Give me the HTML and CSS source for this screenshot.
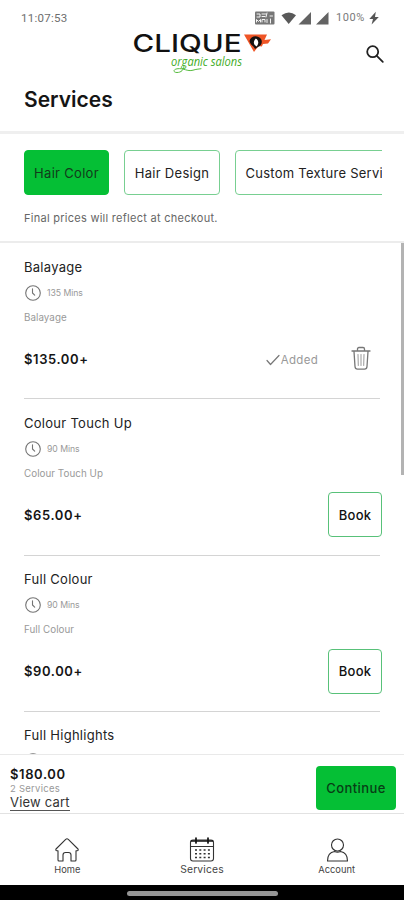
FILE: index.html
```html
<!DOCTYPE html>
<html lang="en">
<head>
<meta charset="utf-8">
<title>Services</title>
<link rel="stylesheet" href="styles.css">
</head>
<body>
<svg class="defs" aria-hidden="true">
  <symbol id="clock" viewBox="0 0 18 18"><circle cx="9" cy="9" r="7.3"/><path d="M8.500 4.800V9l2.200 2.200"/></symbol>
</svg>
<div class="app">
  <header class="top">
    <div class="status">
      <span class="time">11:07:53</span>
      <div class="signals">
        <svg class="sig" viewBox="0 0 76 16" width="76" height="16">
          <rect x="0" y="1.500" width="19.500" height="13" rx="1" fill="#777"/>
          <path d="M2 4h3v3H2M7 4h4M7 6.500h3M12 3l-1 4M1.500 12V9.500l2 2 2-2V12M7 12V9.500h3V12M12 9.500v3M15 6h2.500M15.500 9v4" fill="none" stroke="#f4f4f4" stroke-width="1"/>
          <path d="M26.500 5.200q7.500-5.500 14.500 0L33.700 14z" fill="#595959"/>
          <path d="M56 2v12.500H43.500zM73.500 2v12.500H61z" fill="#636363"/>
        </svg>
        <span class="pct">100%</span>
        <svg viewBox="0 0 10 14" width="10" height="14"><path d="M6.800.8L.3 8H4L2.600 13.500 9.800 6H6z" fill="#555"/></svg>
      </div>
    </div>
    <div class="brand">
      <svg class="logo" viewBox="0 0 140 44" width="140" height="44">
        <text class="logo-name" x="-.5" y="18" textLength="109" lengthAdjust="spacingAndGlyphs">CLIQUE</text>
        <path d="M111 .5h23l-2.500 5.500 6.500-.8-3 4.300-5 .5-1.200 2.500-3.300-.5-4.500 6z" fill="#ef5526"/>
        <path d="M116.500 7c1-5 8-6.500 11.500-2 2 3 0 7-3 8l-3 2c-1-3-4.500-3.500-5.500-8z" fill="#16110f"/>
        <path d="M122.800 4.500c3 2 3.200 5 .8 8-3.500-2-3.500-5-.8-8z" fill="#fff"/>
        <text class="logo-tag" x="38" y="32" textLength="71" lengthAdjust="spacingAndGlyphs">organic salons</text>
        <path d="M51 32c0 4-3 6.500-7 6.500-4 0-4-3 0-3.700 7-1 10 3 16 1.400 3-1 5-1 8-1.500" fill="none" stroke="#55bb3d" stroke-width="1"/>
      </svg>
      <svg class="search" viewBox="0 0 20 20" width="20" height="20"><circle cx="7.700" cy="7.700" r="5.500"/><path d="M11.800 11.800l6 6"/></svg>
    </div>
    <h1>Services</h1>
  </header>
  <section class="filters">
    <div class="chips">
      <button class="chip on">Hair Color</button>
      <button class="chip design">Hair Design</button>
      <button class="chip custom">Custom Texture Services</button>
    </div>
    <p class="note">Final prices will reflect at checkout.</p>
  </section>
  <main class="list">
    <article class="service">
      <h2>Balayage</h2>
      <div class="mins"><svg class="clock"><use href="#clock"/></svg><span>135 Mins</span></div>
      <p class="desc">Balayage</p>
      <div class="buy">
        <b>$135.00+</b>
        <div class="added">
          <svg class="check" viewBox="0 0 14 12" width="14" height="12"><path d="M1 6.500l3.500 4L13 1.500"/></svg>
          <span>Added</span>
          <svg class="trash" viewBox="0 0 20 25" width="20" height="25"><path d="M1 5h18M6.500 5V3q0-1.500 1.500-1.500h4q1.500 0 1.500 1.500v2M3 5.500l1 15q.2 2.700 2.500 2.700h7q2.300 0 2.500-2.700l1-15"/><path class="ribs" d="M7 8.500l.3 11M10 8.500v11M13 8.500l-.3 11"/></svg>
        </div>
      </div>
    </article>
    <article class="service">
      <h2>Colour Touch Up</h2>
      <div class="mins"><svg class="clock"><use href="#clock"/></svg><span>90 Mins</span></div>
      <p class="desc">Colour Touch Up</p>
      <div class="buy"><b>$65.00+</b><button class="book">Book</button></div>
    </article>
    <article class="service">
      <h2>Full Colour</h2>
      <div class="mins"><svg class="clock"><use href="#clock"/></svg><span>90 Mins</span></div>
      <p class="desc">Full Colour</p>
      <div class="buy"><b>$90.00+</b><button class="book">Book</button></div>
    </article>
    <article class="service">
      <h2>Full Highlights</h2>
      <div class="mins"><svg class="clock"><use href="#clock"/></svg></div>
    </article>
    <div class="scrollbar"></div>
  </main>
  <section class="cart">
    <div class="total"><b>$180.00</b><small>2 Services</small><a>View cart</a></div>
    <button class="continue">Continue</button>
  </section>
  <nav class="tabs">
    <a><svg viewBox="0 0 26 26" width="26" height="26"><path d="M2 12L11.700 2.300q1.300-1.100 2.600 0L24 12q.8 1.500-1 1.700h-1V23q0 1-1 1h-4v-6q0-2.500-2.500-2.500h-3Q9 15.500 9 18v6H5q-1 0-1-1v-9.300H3Q1.300 13.500 2 12z"/></svg><span>Home</span></a>
    <a><svg viewBox="0 0 26 26" width="26" height="26"><rect x="1.500" y="3" width="23" height="21" rx="2.500"/><path d="M1.500 9.500h23"/><path class="bold" d="M2.500 4h21M7 1v5M19 1v5"/><path class="days" d="M6 13h15M6 16.700h15M6 20.400h15"/></svg><span class="current">Services</span></a>
    <a><svg viewBox="0 0 26 26" width="26" height="26"><circle cx="13.500" cy="8" r="6"/><path d="M3.500 24q0-8.500 7-9.500 3 1.200 6 0 7 1 7 9.500z"/></svg><span class="acct">Account</span></a>
  </nav>
  <footer class="gesture"><i></i></footer>
</div>
</body>
</html>
```
FILE: styles.css
```css
* { box-sizing: border-box; }
body { margin: 0; background: #fff; font-family: Inter, "Liberation Sans", sans-serif; color: #222; }
h1, h2, p { margin: 0; }
button { font: inherit; color: inherit; background: none; padding: 0; }
svg { display: block; flex: none; fill: none; stroke-linecap: round; stroke-linejoin: round; }
.defs { position: absolute; width: 0; height: 0; }
.app { width: 404px; height: 900px; display: flex; flex-direction: column; overflow: hidden; }

.top { height: 134px; flex: none; border-bottom: 3px solid #efefef; }
.status { height: 32px; padding: 3px 25px 0 21px; display: flex; justify-content: space-between; align-items: center; color: #6e6e6e; font-family: Roboto, sans-serif; }
.time { font-size: 11.5px; letter-spacing: .25px; }
.signals { display: flex; align-items: center; }
.pct { font-size: 11px; letter-spacing: .6px; margin: 0 4px 0 5px; color: #7a7a7a; }
.brand { height: 44px; padding: 0 19px 0 133px; display: flex; justify-content: space-between; }
.logo { margin-top: 2px; overflow: visible; }
.logo-name { font: 500 24px Inter, sans-serif; fill: #111; }
.logo-tag { font: italic 12px "Open Sans", sans-serif; fill: #3fac27; }
.search { margin-top: 12px; stroke: #222; stroke-width: 1.8; }
h1 { padding-left: 24px; margin-top: 11px; font-size: 21px; line-height: 26px; font-weight: 600; letter-spacing: 0; color: #151515; }

.filters { height: 109px; flex: none; padding: 16px 22px 0 24px; border-bottom: 2px solid #ececec; }
.chips { display: flex; gap: 15px; overflow: hidden; }
.chip { flex: none; height: 45px; width: 85px; border: 1px solid #78cf91; border-radius: 4px; font-size: 13px; letter-spacing: .3px; white-space: nowrap; }
.chip.on { background: #05bf35; border-color: #05bf35; color: #123b1b; }
.design { width: 96px; }
.custom { width: 182px; padding-left: 9.5px; text-align: left; letter-spacing: .25px; }
.note { margin-top: 16px; font-size: 11px; line-height: 15px; letter-spacing: .27px; color: #666; }

.list { position: relative; height: 511px; flex: none; overflow: hidden; padding: 0 24px; }
.service { height: 156.3px; padding-top: 14.5px; border-bottom: 1px solid #d4d4d4; }
h2 { font-size: 13px; line-height: 18px; font-weight: 400; letter-spacing: .28px; color: #222; }
.mins { display: flex; align-items: center; gap: 5px; height: 18px; margin-top: 8px; font-size: 8.7px; letter-spacing: -.05px; color: #999; }
.clock { width: 18px; height: 18px; stroke: #747474; stroke-width: 1.1; }
.desc { margin-top: 9px; font-size: 9.8px; line-height: 14px; color: #999; letter-spacing: .05px; }
.buy { height: 44px; margin-top: 12px; display: flex; align-items: center; justify-content: space-between; }
.buy b { font-size: 13px; font-weight: 600; letter-spacing: .6px; color: #151515; }
.book { width: 54px; height: 45px; margin-right: -2px; border: 1px solid #58c179; border-radius: 4px; font-size: 13px; font-weight: 500; letter-spacing: .3px; color: #111; }
.added { display: flex; align-items: center; font-size: 11.5px; letter-spacing: .3px; color: #999; margin-right: 9px; }
.added span { margin-top: 3px; }
.check { margin: 3px 1px 0 0; stroke: #777; stroke-width: 1.2; }
.trash { margin-left: 33px; stroke: #777; stroke-width: 1.3; }
.ribs { stroke: #999; stroke-width: 1; }
.scrollbar { position: absolute; right: 0; top: -1px; width: 3px; height: 233px; background: #b3b3b3; }

.cart { height: 60px; flex: none; border-top: 1px solid #e9e9e9; border-bottom: 1px solid #e2e2e2; padding: 11px 8px 0 10px; display: flex; justify-content: space-between; }
.total { display: flex; flex-direction: column; align-items: flex-start; }
.total b { font-size: 13px; line-height: 16px; font-weight: 600; letter-spacing: .6px; color: #151515; }
.total small { font-size: 9.5px; line-height: 13px; letter-spacing: .25px; color: #999; }
.total a { font-size: 13px; line-height: 15px; letter-spacing: .2px; border-bottom: 1px solid #555; color: #333; }
.continue { width: 80px; height: 44px; border: 0; border-radius: 4px; background: #05bf35; font-size: 13px; font-weight: 500; letter-spacing: .4px; color: #083d15; }

.tabs { height: 70.5px; flex: none; padding-top: 23px; display: grid; grid-template-columns: repeat(3, 1fr); }
.tabs a { display: flex; flex-direction: column; align-items: center; font-size: 9.3px; line-height: 13px; color: #444; }
.tabs svg { stroke: #333; stroke-width: 1.1; }
.tabs .current { font-size: 10.3px; letter-spacing: .15px; line-height: 12px; }
.bold { stroke: #111; stroke-width: 1.7; }
.days { stroke-dasharray: 2 2.300; stroke-linecap: butt; stroke-width: 1.5; }
.gesture { flex: 1; background: #000; padding-top: 6px; }
.gesture i { display: block; width: 151px; height: 5px; border-radius: 3px; background: #959595; margin: 0 auto; }
```
